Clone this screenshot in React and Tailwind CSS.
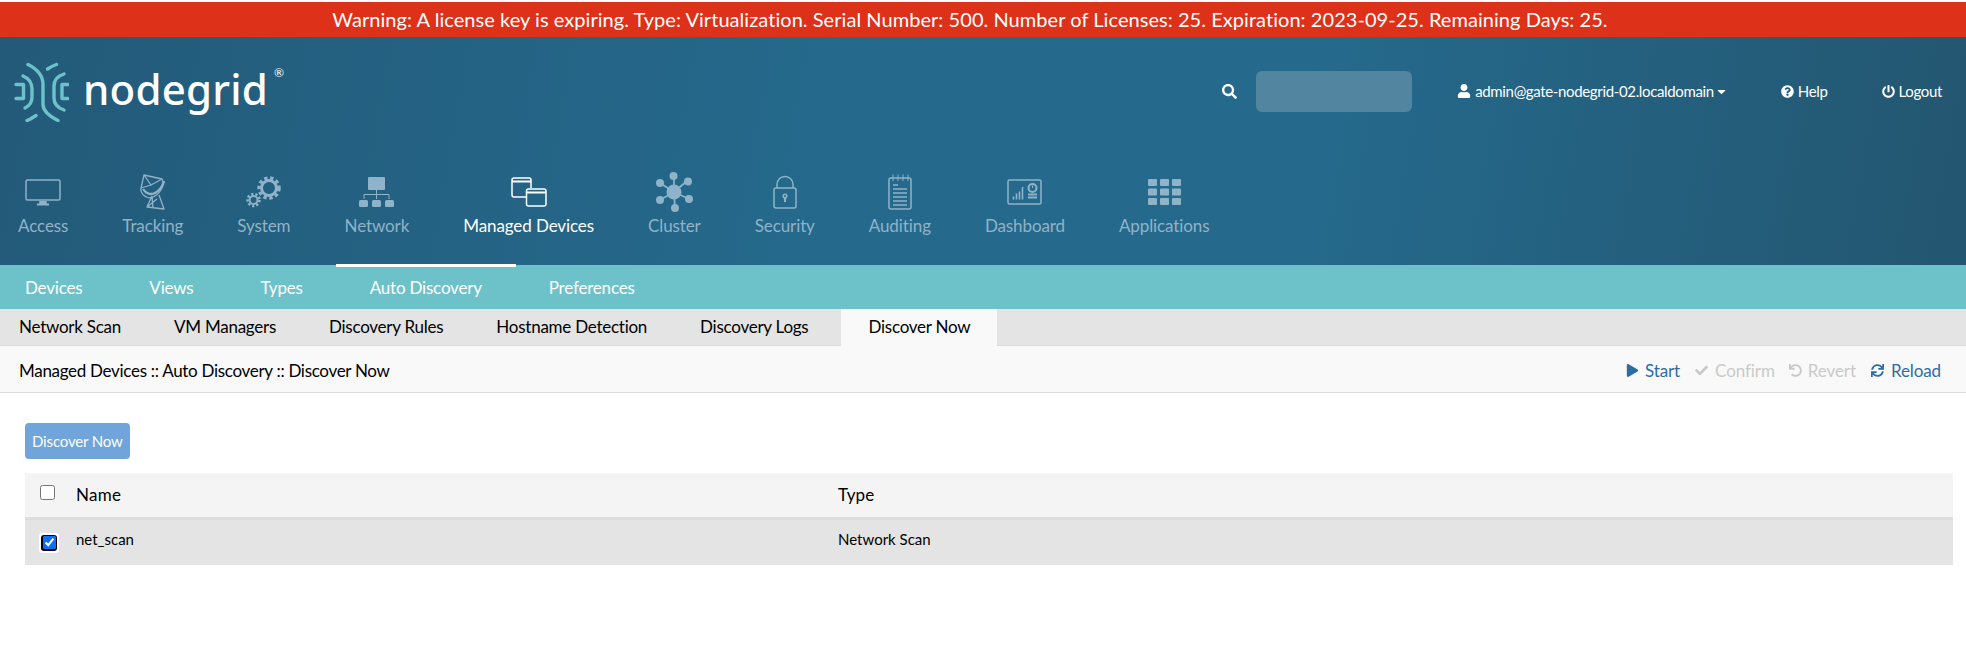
import React from "react";
import { FaSearch, FaUser, FaQuestionCircle, FaPowerOff, FaCaretDown, FaPlay, FaCheck, FaUndo, FaSync } from "react-icons/fa";

const LogoMark = () => (
    <svg width="56" height="66" viewBox="3 1 56 66" fill="none" stroke="#6dc2ca" strokeWidth="3.400" strokeLinecap="round" strokeLinejoin="round">
        <path d="M6 29.500h7.500v14H6" />
        <path d="M13 21c5 2 9 6 9 13v8c0 5-3 9-7 11" />
        <path d="M18 9.500c8 4 15 11 15 20v20c0 7 7 12 15 16" />
        <path d="M37.500 14c3-2 6-3.500 9-4.500" />
        <path d="M54 19c-6 2-10 6-10 12v12c0 6 4 10 10 12" />
        <path d="M58 29.500h-6v14h6" />
        <path d="M17 65.500c3-1 6-3 9-5" />
    </svg>
);

const AccessIcon = () => (
    <svg width="36" height="27" viewBox="0 0 36 27" fill="none" stroke="currentColor" strokeWidth="1.500">
        <rect x="1" y="1" width="34" height="20" rx="1.500" />
        <path d="M15 22v2.500h6V22" fill="currentColor" />
        <path d="M12 25.500h12" strokeWidth="2" />
    </svg>
);

const TrackingIcon = () => (
    <svg width="28" height="36" viewBox="0 0 28 36" fill="none" stroke="currentColor" strokeWidth="1.300" strokeLinejoin="round">
        <path d="M5 1l18 4c3 6-1 15-11 19C6 24 1 19 2 14z" />
        <path d="M5 1l7 10 11-6M2 14l10-3" />
        <path d="M4 15c3 5 8 6 12 4 4-2 8-7 9-12" strokeWidth="2.400" />
        <path d="M13 22l-5 11 17 2-5-14M13 22l1 12M18 25l-10 8" />
    </svg>
);

const SystemIcon = () => (
    <svg width="36" height="32" viewBox="0 0 36 32" fill="none" stroke="currentColor">
        <circle cx="23" cy="12" r="7.500" strokeWidth="3" />
        <circle cx="23" cy="12" r="10" strokeWidth="3.500" strokeDasharray="3.300 2.700" />
        <circle cx="7.500" cy="24" r="4" strokeWidth="2" />
        <circle cx="7.500" cy="24" r="6" strokeWidth="2.500" strokeDasharray="2.200 2" />
    </svg>
);

const NetworkIcon = () => (
    <svg width="36" height="31" viewBox="0 0 36 31" fill="currentColor">
        <rect x="9" y="0" width="17" height="13" rx="1" />
        <path d="M17.500 13v9M5 22v-4.500h25V22" fill="none" stroke="currentColor" strokeWidth="1" />
        <rect x="0" y="23" width="9" height="7" rx="1.500" />
        <rect x="13" y="23" width="9" height="7" rx="1.500" />
        <rect x="26" y="23" width="9" height="7" rx="1.500" />
    </svg>
);

const ManagedIcon = () => (
    <svg width="36" height="30" viewBox="0 0 36 30" fill="none" stroke="currentColor" strokeWidth="1.500">
        <path d="M15 20H3a2 2 0 0 1-2-2V3a2 2 0 0 1 2-2h15a2 2 0 0 1 2 2v8" />
        <path d="M1 4.500h19" strokeWidth="2" />
        <rect x="15.500" y="12" width="19.500" height="17" rx="2" />
        <path d="M15.500 15.500h19.500" strokeWidth="2" />
    </svg>
);

const ClusterIcon = () => (
    <svg width="38" height="40" viewBox="0 0 38 40" fill="currentColor" stroke="currentColor">
        <path d="M19 20L19 4M19 20L5 11M19 20L32 9M19 20L5 28M19 20L34 27M19 20L20 36" strokeWidth="1.800" fill="none" />
        <circle cx="19" cy="20" r="7.500" stroke="none" />
        <circle cx="18.500" cy="4" r="4" stroke="none" />
        <circle cx="5" cy="11" r="4" stroke="none" />
        <circle cx="33" cy="9.500" r="4" stroke="none" />
        <circle cx="5" cy="28" r="4" stroke="none" />
        <circle cx="34" cy="27" r="4" stroke="none" />
        <circle cx="20" cy="36" r="4" stroke="none" />
    </svg>
);

const SecurityIcon = () => (
    <svg width="24" height="34" viewBox="0 0 24 34" fill="none" stroke="currentColor" strokeWidth="1.500">
        <rect x="1" y="13" width="22" height="20" rx="2" />
        <path d="M4 13V9.500a8 8 0 0 1 16 0V13" />
        <circle cx="12" cy="21" r="1.800" />
        <path d="M12 23v4" strokeWidth="2" />
    </svg>
);

const AuditingIcon = () => (
    <svg width="24" height="36" viewBox="0 0 24 36" fill="none" stroke="currentColor" strokeWidth="1.500">
        <rect x="1" y="4" width="22" height="31" rx="2" />
        <path d="M5 0.500V7M10 0.500V7M15 0.500V7M20 0.500V7" strokeWidth="1" />
        <path d="M5 11h5M5 15h14M5 19h14M5 23h14M5 27h14M5 31h14" />
    </svg>
);

const DashboardIcon = () => (
    <svg width="35" height="26" viewBox="0 0 35 26" fill="none" stroke="currentColor">
        <rect x="1" y="1" width="33" height="24" rx="1.500" strokeWidth="1.500" />
        <path d="M6.500 20.500v-3M9.500 20.500v-6M12.500 20.500v-8M15.500 20.500V8" strokeWidth="1.600" />
        <circle cx="25.500" cy="9" r="4" strokeWidth="2" />
        <path d="M25.500 6.500V9" />
        <path d="M21 15.500h9M21 18.500h9" strokeWidth="1.800" />
    </svg>
);

const ApplicationsIcon = () => (
    <svg width="33" height="26" viewBox="0 0 33 26" fill="currentColor">
        {[0, 9.500, 19].map((y) =>
            [0, 12, 24].map((x) => <rect key={`${x}-${y}`} x={x} y={y} width="9" height="7" rx="1" />)
        )}
    </svg>
);

const mainNav = [
    { name: "Access", icon: AccessIcon },
    { name: "Tracking", icon: TrackingIcon },
    { name: "System", icon: SystemIcon },
    { name: "Network", icon: NetworkIcon },
    { name: "Managed Devices", icon: ManagedIcon, active: true },
    { name: "Cluster", icon: ClusterIcon },
    { name: "Security", icon: SecurityIcon },
    { name: "Auditing", icon: AuditingIcon },
    { name: "Dashboard", icon: DashboardIcon },
    { name: "Applications", icon: ApplicationsIcon },
];

const subNav = ["Devices", "Views", "Types", "Auto Discovery", "Preferences"];
const tabs = ["Network Scan", "VM Managers", "Discovery Rules", "Hostname Detection", "Discovery Logs"];

const App = () => {
    return (
        <div className="min-h-[655px] bg-white font-['Lato','Liberation_Sans',sans-serif] text-black">
            {/* warning banner */}
            <div className="mt-[2px] h-[35px] bg-[#dd3119] pr-[26px] text-center text-[20px] leading-[34px] tracking-[0.05px] text-white">
                Warning: A license key is expiring. Type: Virtualization. Serial Number: 500. Number of Licenses: 25. Expiration: 2023-09-25. Remaining Days: 25.
            </div>

            <div className="h-[228px] bg-[linear-gradient(100deg,#235a79_0%,#256a8d_45%,#256a8d_65%,#235670_100%)]">
                {/* top row */}
                <div className="flex h-[108px] items-center text-white">
                    <div className="ml-[13px] flex items-start">
                        <div className="-mt-[4px]">
                            <LogoMark />
                        </div>
                        <span className="ml-[14px] mt-[2px] font-['Noto_Sans',sans-serif] text-[42px] font-medium leading-[54px] tracking-[0.2px]">nodegrid</span>
                        <span className="ml-[6px] mt-[7px] text-[12px] leading-none">®</span>
                    </div>
                    <div className="ml-auto flex items-center text-[15px] tracking-[-0.35px]">
                        <FaSearch className="text-[15px]" />
                        <div className="ml-[19px] h-[41px] w-[156px] rounded-[6px] bg-[#52859f]" />
                        <FaUser className="ml-[45px] text-[14px]" />
                        <span className="ml-[4px]">admin@gate-nodegrid-02.localdomain</span>
                        <FaCaretDown className="ml-[1px] text-[13px]" />
                        <FaQuestionCircle className="ml-[53px] text-[13px]" />
                        <span className="ml-[4px]">Help</span>
                        <FaPowerOff className="ml-[54px] text-[13px]" />
                        <span className="ml-[4px] mr-[24px]">Logout</span>
                    </div>
                </div>
                {/* main nav */}
                <div className="flex gap-[54px] pl-[18px] pt-[27px]">
                    {mainNav.map((item) => (
                        <div key={item.name} className={`flex flex-col items-center ${item.active ? "text-white" : "text-[#8fb3c8]"}`}>
                            <div className="flex h-[40px] items-center">
                                <item.icon />
                            </div>
                            <span className="mt-[2px] text-[17px] leading-[24px] tracking-[-0.1px]">{item.name}</span>
                        </div>
                    ))}
                </div>
            </div>

            {/* sub nav */}
            <div className="flex h-[44px] items-center gap-[67px] bg-[#6dc2ca] pl-[25px] pt-[1px] text-[17px] tracking-[-0.2px] text-white">
                {subNav.map((item) => (
                    <div key={item} className="relative">
                        {item === "Auto Discovery" && <div className="absolute -left-[34px] -right-[34px] -top-[11px] h-[3px] bg-white" />}
                        {item}
                    </div>
                ))}
            </div>

            {/* tabs */}
            <div className="flex h-[37px] border-b-[1px] border-[#dcdcdc] bg-[#e4e4e4] pl-[19px] text-[17px] leading-[36px] tracking-[-0.25px]">
                <div className="flex gap-[53px]">
                    {tabs.map((tab) => (
                        <span key={tab}>{tab}</span>
                    ))}
                </div>
                <div className="relative ml-[33px] h-[37px] bg-[#f9f9f9] px-[27px]">Discover Now</div>
            </div>

            {/* breadcrumb */}
            <div className="flex h-[47px] items-center border-b-[1px] border-[#dcdcdc] bg-[#f9f9f9] px-[19px] pt-[3px] text-[17px]">
                <span className="tracking-[-0.3px]">Managed Devices :: Auto Discovery :: Discover Now</span>
                <div className="ml-auto mr-[6px] flex items-center tracking-[-0.1px] text-[#2e6da4]">
                    <FaPlay className="text-[13px]" />
                    <span className="ml-[6px]">Start</span>
                    <FaCheck className="ml-[15px] text-[13px] text-[#c9c9c9]" />
                    <span className="ml-[7px] text-[#c9c9c9]">Confirm</span>
                    <FaUndo className="ml-[14px] text-[13px] text-[#c9c9c9]" />
                    <span className="ml-[6px] text-[#c9c9c9]">Revert</span>
                    <FaSync className="ml-[15px] text-[13px]" />
                    <span className="ml-[7px]">Reload</span>
                </div>
            </div>

            {/* content */}
            <div className="px-[25px] pt-[30px] pr-[13px]">
                <button className="h-[36px] rounded-[4px] bg-[#70a4da] px-[7px] pt-[1px] text-[15px] tracking-[-0.15px] text-white">Discover Now</button>
                <div className="mt-[14px]">
                    <div className="flex h-[47px] items-center border-b-[3px] border-[#dddddd] bg-[#f4f4f4] text-[17px]">
                        <div className="flex w-[51px] justify-center">
                            <input type="checkbox" readOnly className="-mt-[6px] ml-[-6px] h-[15px] w-[15px]" />
                        </div>
                        <div className="w-[762px] tracking-[0.3px]">Name</div>
                        <div className="tracking-[0.1px]">Type</div>
                    </div>
                    <div className="flex h-[45px] items-center bg-[#e4e4e4] text-[15px]">
                        <div className="flex w-[51px] justify-center">
                            <span className="ml-[-3px] flex rounded-[3px] bg-white p-[2px]">
                                <span className="flex rounded-[3px] bg-black p-[1.5px]">
                                    <input type="checkbox" checked readOnly className="h-[13px] w-[13px] accent-[#0d6efd]" />
                                </span>
                            </span>
                        </div>
                        <div className="-mt-[6px] w-[762px]">net_scan</div>
                        <div className="-mt-[6px]">Network Scan</div>
                    </div>
                </div>
            </div>
        </div>
    );
};

export default App;
